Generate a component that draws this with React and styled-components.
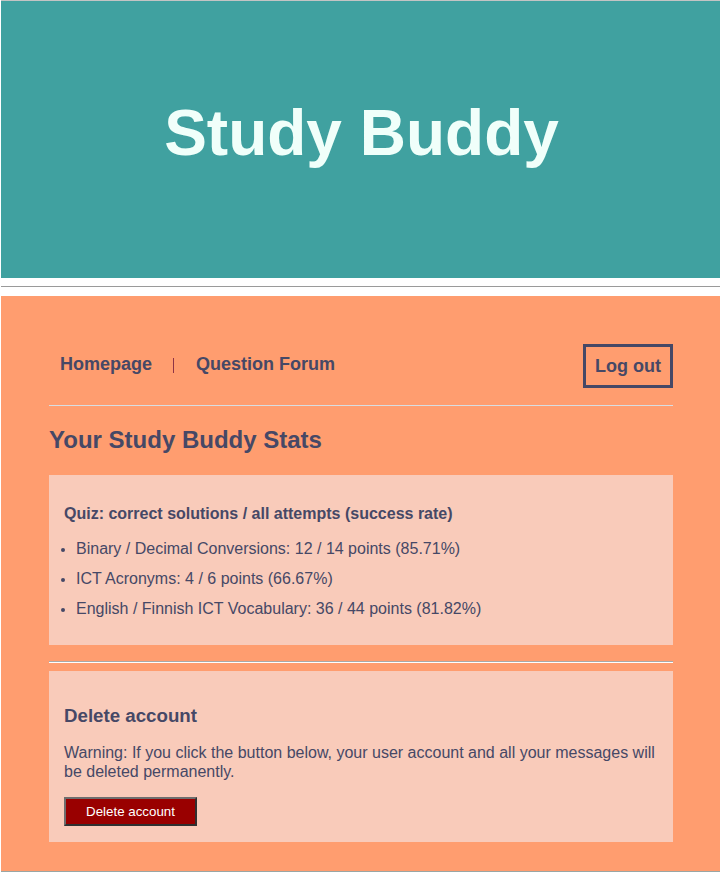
import React from 'react';
import styled, { createGlobalStyle } from 'styled-components';

const GlobalStyle = createGlobalStyle`
  body {
    margin: 0;
    font-family: "Liberation Sans", Arial, sans-serif;
    background: #ffffff;
  }
`;

const Header = styled.header`
  margin-left: 1px;
  height: 278px;
  box-sizing: border-box;
  padding-bottom: 14px;
  border-top: 1px solid #c4c4c4;
  background-color: #40a1a0;
  display: flex;
  align-items: center;
  justify-content: center;
`;

const Title = styled.h1`
  margin: 0 0 0 2px;
  font-size: 64px;
  font-weight: bold;
  color: #f0fffa;
`;

const Rule = styled.hr`
  margin: 8px 0 8px 1px;
  border: none;
  border-top: 1px solid #9a9a9a;
  border-bottom: 1px solid #ffffff;
`;

const Main = styled.main`
  margin-left: 1px;
  padding: 48px 47px 29px 48px;
  background-color: #ff9d6f;
  border-bottom: 2px solid #9aa6a4;
  color: #464866;
`;

const Nav = styled.nav`
  display: flex;
  justify-content: space-between;
  align-items: flex-start;
  padding-bottom: 17px;
  border-bottom: 1px solid #d8dde2;
`;

const NavLinks = styled.div`
  display: flex;
  align-items: center;
  padding: 10px 0 0 11px;
`;

const NavLink = styled.a`
  font-size: 18px;
  font-weight: bold;
  color: #464866;
  text-decoration: none;
`;

const Separator = styled.span`
  width: 1px;
  height: 15px;
  margin: 1px 22px 0 21px;
  background-color: #8e3446;
`;

const LogoutButton = styled.button`
  height: 44px;
  padding: 0 9px;
  border: 3px solid #464866;
  background: transparent;
  font-family: "Liberation Sans", Arial, sans-serif;
  font-size: 18px;
  font-weight: bold;
  color: #464866;
  cursor: pointer;
`;

const Heading = styled.h2`
  margin: 20px 0 21px;
  font-size: 24px;
  line-height: 28px;
  font-weight: bold;
`;

const Box = styled.section`
  padding: ${({ $top }) => $top}px 15px ${({ $bottom }) => $bottom}px;
  background-color: #f9cbba;
`;

const BoxTitle = styled.h4`
  margin: 0 0 17px;
  font-size: 16px;
  line-height: 18px;
  font-weight: bold;
`;

const StatList = styled.ul`
  margin: 0;
  padding-left: 12px;
  list-style: disc;
`;

const StatItem = styled.li`
  font-size: 16px;
  line-height: 18px;
  margin-bottom: 12px;

  &:last-child {
    margin-bottom: 0;
  }
  &::marker {
    font-size: 14px;
  }
`;

const Divider = styled.hr`
  margin: 16px 0 8px;
  border: none;
  border-top: 1px solid #a8a8a8;
  border-bottom: 1px solid #ffffff;
`;

const DeleteTitle = styled.h3`
  margin: 0 0 16px;
  font-size: 18.7px;
  line-height: 22px;
  font-weight: bold;
`;

const Warning = styled.p`
  margin: 0 0 16px;
  font-size: 16px;
  line-height: 19px;
`;

const DangerButton = styled.button`
  display: block;
  width: 133px;
  height: 29px;
  padding: 0;
  border: 2px solid;
  border-color: #6e6e6e #303030 #303030 #6e6e6e;
  background-color: #990000;
  font-family: "Liberation Sans", Arial, sans-serif;
  font-size: 13.33px;
  color: #ffffff;
  cursor: pointer;
`;

const stats = [
  'Binary / Decimal Conversions: 12 / 14 points (85.71%)',
  'ICT Acronyms: 4 / 6 points (66.67%)',
  'English / Finnish ICT Vocabulary: 36 / 44 points (81.82%)',
];

export default function App() {
  return (
    <>
      <GlobalStyle />
      <Header>
        <Title>Study Buddy</Title>
      </Header>
      <Rule />
      <Main>
        <Nav>
          <NavLinks>
            <NavLink href="#">Homepage</NavLink>
            <Separator />
            <NavLink href="#">Question Forum</NavLink>
          </NavLinks>
          <LogoutButton>Log out</LogoutButton>
        </Nav>
        <Heading>Your Study Buddy Stats</Heading>
        <Box $top={30} $bottom={27}>
          <BoxTitle>Quiz: correct solutions / all attempts (success rate)</BoxTitle>
          <StatList>
            {stats.map((s) => (
              <StatItem key={s}>{s}</StatItem>
            ))}
          </StatList>
        </Box>
        <Divider />
        <Box $top={34} $bottom={16}>
          <DeleteTitle>Delete account</DeleteTitle>
          <Warning>
            Warning: If you click the button below, your user account and all your messages will be
            deleted permanently.
          </Warning>
          <DangerButton>Delete account</DangerButton>
        </Box>
      </Main>
    </>
  );
}
